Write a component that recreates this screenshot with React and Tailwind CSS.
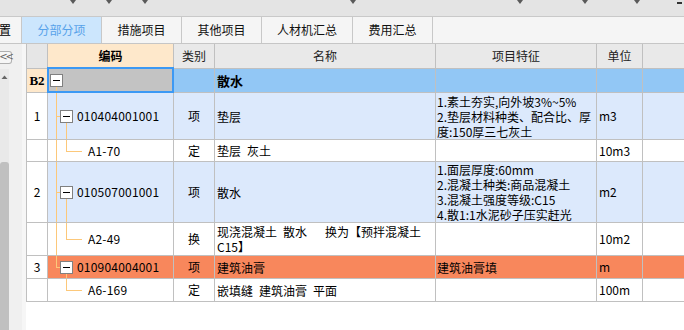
import React from 'react'

const FONT = { fontFamily: '"Noto Sans CJK SC", "Noto Sans", sans-serif' }
const LINE = 'bg-[#fcc87a]'

const TABS = [
  { label: '分部分项', w: 'w-[80px]', active: true },
  { label: '措施项目', w: 'w-[80px]' },
  { label: '其他项目', w: 'w-[80px]' },
  { label: '人材机汇总', w: 'w-[91px]' },
  { label: '费用汇总', w: 'w-[80px]' },
]

function Tri({ ml }) {
  return (
    <svg width="6" height="4" viewBox="0 0 6 4" className={ml}>
      <path d="M0 0 H6 L3 4 Z" fill="#5a5a5a" />
    </svg>
  )
}

function Box() {
  return (
    <span className="relative z-10 flex h-[13px] w-[13px] shrink-0 items-center justify-center border border-[#808080] bg-white">
      <span className="h-px w-[7px] bg-black" />
    </span>
  )
}

// tree cell for the 编码 column
function Tree({ kind, text, last, noTrunk }) {
  return (
    <div className="relative flex h-full w-full items-center">
      {kind === 'root' && (
        <>
          <span className={`absolute left-[8px] top-1/2 bottom-0 w-px ${LINE}`} />
          <span className="ml-[2px]"><Box /></span>
        </>
      )}
      {kind === 'item' && (
        <>
          <span className={`absolute left-[8px] top-0 w-px ${LINE} ${last ? 'h-1/2' : 'bottom-0'}`} />
          <span className={`absolute left-[8px] top-1/2 h-px w-[5px] ${LINE}`} />
          <span className={`absolute left-[18px] top-1/2 bottom-0 w-px ${LINE}`} />
          <span className="ml-[12px]"><Box /></span>
          <span className="ml-[4px] text-[12px] leading-[14px] tracking-[0.2px]">{text}</span>
        </>
      )}
      {kind === 'child' && (
        <>
          {!noTrunk && <span className={`absolute left-[8px] top-0 bottom-0 w-px ${LINE}`} />}
          <span className={`absolute left-[18px] top-0 h-1/2 w-px ${LINE}`} />
          <span className={`absolute left-[18px] top-1/2 h-px w-[16px] ${LINE}`} />
          <span className="ml-[40px] text-[12px] leading-[14px] tracking-[0.2px]">{text}</span>
        </>
      )}
    </div>
  )
}

function Row({ h, bg, numBg = 'bg-white', num, code, codeBg, type, name, feat, unit, selected }) {
  return (
    <div className={`flex ${h} border-b border-[#c0c0c0] ${bg}`}>
      <div className={`flex w-[21px] shrink-0 items-center justify-center border-r border-[#c0c0c0] ${numBg} text-[12px]`}>
        {num}
      </div>
      <div className={`relative w-[126px] shrink-0 border-r border-[#c0c0c0] ${codeBg || ''}`}>
        {code}
        {selected && <div className="pointer-events-none absolute -left-[1px] -top-[2px] -right-[1px] -bottom-[1px] z-20 border-2 border-[#3c99f4]" />}
      </div>
      <div className="flex w-[41px] shrink-0 items-center justify-center border-r border-[#c0c0c0] text-[12px]">{type}</div>
      <div className="flex w-[221px] shrink-0 items-center border-r border-[#c0c0c0] pl-[2px] text-[12px] leading-[15px]">{name}</div>
      <div className="flex w-[161px] shrink-0 items-center border-r border-[#c0c0c0] pl-[1px] text-[12px] leading-[15px] whitespace-nowrap">{feat}</div>
      <div className="flex w-[46px] shrink-0 items-center border-r border-[#c0c0c0] pl-[2px] text-[12px]">{unit}</div>
      <div className="w-[80px] shrink-0 border-r border-[#c0c0c0]" />
    </div>
  )
}

export default function App() {
  return (
    <div className="h-[330px] w-[684px] overflow-hidden bg-white text-black" style={FONT}>
      {/* clipped toolbar strip */}
      <div className="flex h-[17px] items-start border-b border-[#c9c9c9] bg-[#e4e4e4]">
        <Tri ml="ml-[70px]" />
        <Tri ml="ml-[30px]" />
        <Tri ml="ml-[30px]" />
        <Tri ml="ml-[202px]" />
        <Tri ml="ml-[161px]" />
        <Tri ml="ml-[59px]" />
        <Tri ml="ml-[46px]" />
        <span className="ml-[37px] mt-[2px] h-[2px] w-[5px] bg-[#333]" />
      </div>

      {/* tabs */}
      <div className="flex h-[27px] border-b border-[#c6c6c6] bg-[#f5f5f5]">
        <div className="flex w-[22px] shrink-0 items-center overflow-hidden border-r border-[#c8c8c8]">
          <span className="-ml-[1px] text-[12px]">置</span>
        </div>
        {TABS.map((t) => (
          <div
            key={t.label}
            className={`flex ${t.w} shrink-0 items-center justify-center border-r border-[#c8c8c8] text-[12px] ${t.active ? 'bg-[#cce6fd] text-[#58a2ea]' : 'text-[#111]'}`}
          >
            {t.label}
          </div>
        ))}
      </div>

      <div className="flex h-[286px]">
        {/* left side panel */}
        <div className="flex w-[26px] shrink-0 bg-[#f0f0f0]">
          <div className="flex w-[9px] flex-col">
            <div className="mt-[7px] flex h-[13px] w-[12px] shrink-0 items-center justify-center rounded-r-[3px] border border-l-0 border-[#b0b0b0] bg-[#f6f6f6] text-[10px] leading-none text-[#666]" style={{ fontFamily: '"DejaVu Sans", sans-serif' }}>
              <span className="-mt-[1px] tracking-[-2px]">&lt;&lt;</span>
            </div>
            <div className="mt-[5px] flex flex-1 flex-col bg-[#e9e9e9]">
              <svg width="9" height="6" viewBox="0 0 9 6" className="mt-[5px]">
                <path d="M1.5 5 L4.5 1.5 L7.5 5 Z" fill="#666" />
              </svg>
              <div className="mt-[82px] flex-1 rounded-t-[3px] bg-[#c0c0c0]" />
            </div>
          </div>
          <div className="flex-1" />
          <div className="w-[4px] bg-[#f6f6f6]" />
        </div>

        {/* grid */}
        <div className="flex-1 overflow-hidden">
          <div className="w-[700px] border-l border-[#c0c0c0]">
            {/* header */}
            <div className="flex h-[25px] border-b border-[#c0c0c0] bg-[#e9e9e9] text-[12px] text-[#222]">
              <div className="w-[21px] shrink-0 border-r border-[#c0c0c0] bg-[#e6e6e6]" />
              <div className="flex w-[126px] shrink-0 items-center justify-center border-r border-[#c0c0c0] bg-[#fee8cb] font-bold text-black">编码</div>
              <div className="flex w-[41px] shrink-0 items-center justify-center border-r border-[#c0c0c0]">类别</div>
              <div className="flex w-[221px] shrink-0 items-center justify-center border-r border-[#c0c0c0]">名称</div>
              <div className="flex w-[161px] shrink-0 items-center justify-center border-r border-[#c0c0c0]">项目特征</div>
              <div className="flex w-[46px] shrink-0 items-center justify-center border-r border-[#c0c0c0]">单位</div>
              <div className="w-[80px] shrink-0 border-r border-[#c0c0c0]" />
            </div>

            <Row
              h="h-[24px]"
              bg="bg-[#92c7f5]"
              numBg="bg-[#fee8cb]"
              num={<span className="text-[13px] font-bold" style={{ fontFamily: '"Liberation Serif", serif' }}>B2</span>}
              codeBg="bg-[#c3c3c3]"
              code={<Tree kind="root" />}
              selected
              name={<span className="text-[13px] font-bold">散水</span>}
            />
            <Row
              h="h-[47px]"
              bg="bg-[#dce9fc]"
              num="1"
              code={<Tree kind="item" text="010404001001" />}
              type="项"
              name="垫层"
              feat={<span>1.素土夯实,向外坡3%~5%<br />2.垫层材料种类、配合比、厚<br />度:150厚三七灰土</span>}
              unit="m3"
            />
            <Row
              h="h-[22px]"
              bg="bg-white"
              code={<Tree kind="child" text="A1-70" />}
              type="定"
              name={'垫层\u2002灰土'}
              unit="10m3"
            />
            <Row
              h="h-[61px]"
              bg="bg-[#dce9fc]"
              num="2"
              code={<Tree kind="item" text="010507001001" />}
              type="项"
              name="散水"
              feat={<span>1.面层厚度:60mm<br />2.混凝土种类:商品混凝土<br />3.混凝土强度等级:C15<br />4.散1:1水泥砂子压实赶光</span>}
              unit="m2"
            />
            <Row
              h="h-[33px]"
              bg="bg-white"
              code={<Tree kind="child" text="A2-49" />}
              type="换"
              name={<span>{'现浇混凝土\u2002散水\u2003\u2002换为【预拌混凝土'}<br />C15】</span>}
              unit="10m2"
            />
            <Row
              h="h-[23px]"
              bg="bg-[#f8875c]"
              num="3"
              codeBg="bg-[#f8875c]"
              code={<Tree kind="item" text="010904004001" last />}
              type="项"
              name="建筑油膏"
              feat="建筑油膏填"
              unit="m"
            />
            <Row
              h="h-[23px]"
              bg="bg-white"
              code={<Tree kind="child" text="A6-169" noTrunk />}
              type="定"
              name={'嵌填缝\u2002建筑油膏\u2002平面'}
              unit="100m"
            />
          </div>
        </div>
      </div>
    </div>
  )
}
